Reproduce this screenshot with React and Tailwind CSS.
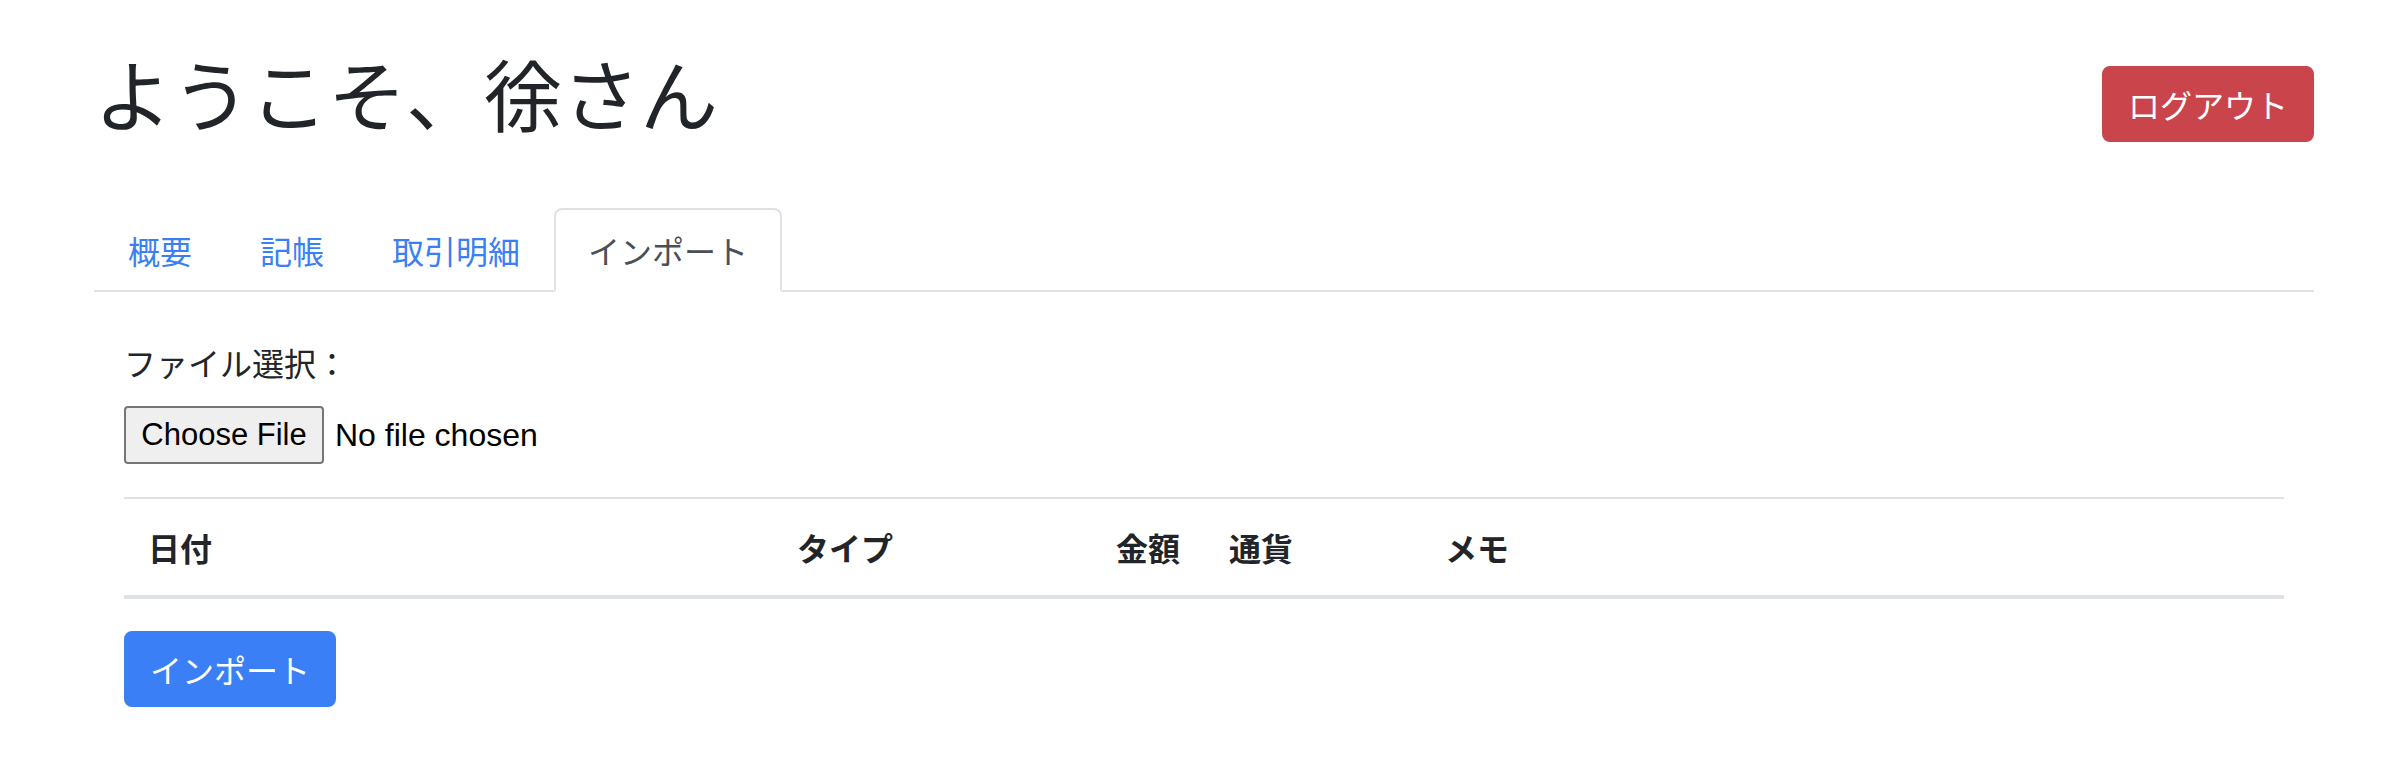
import React, { useState } from "react";

const tabs = ["概要", "記帳", "取引明細", "インポート"];

const columns = [
  { label: "日付", width: "w-[649px]" },
  { label: "タイプ", width: "w-[319px]" },
  { label: "金額", width: "w-[113px]" },
  { label: "通貨", width: "w-[216px]" },
  { label: "メモ", width: "" },
];

export default function App() {
  const [active, setActive] = useState(3);

  return (
    <div className="bg-white text-[#212529] font-['Noto_Sans_CJK_JP','Noto_Sans',sans-serif] pt-[44px]">
      <div className="w-[2220px] mx-auto">
        {/* Header */}
        <div className="flex items-center justify-between mb-[44px]">
          <h1 className="text-[78px] leading-[96px] font-normal mb-[24px]">
            ようこそ、徐さん
          </h1>
          <button className="h-[76px] px-[24px] rounded-[8px] bg-[#ca454b] text-white text-[32px] leading-[48px] border-2 border-[#ca454b]">
            ログアウト
          </button>
        </div>

        {/* Tabs */}
        <ul className="flex border-b-2 border-[#dee2e6]">
          {tabs.map((tab, i) => (
            <li key={tab} className="-mb-[2px]">
              <button
                onClick={() => setActive(i)}
                className={
                  i === active
                    ? "block px-[32px] py-[16px] text-[32px] leading-[48px] border-2 border-[#dee2e6] border-b-white rounded-t-[8px] bg-white text-[#495057]"
                    : "block px-[32px] py-[16px] text-[32px] leading-[48px] border-2 border-transparent rounded-t-[8px] text-[#3a7ff6]"
                }
              >
                {tab}
              </button>
            </li>
          ))}
        </ul>

        {/* Import pane */}
        <div className="px-[30px] pt-[46px]">
          <div className="mb-[33px]">
            <label className="block text-[32px] leading-[48px] mb-[20px]">
              ファイル選択：
            </label>
            <div className="flex items-center h-[58px] font-['Liberation_Sans',Arial,sans-serif]">
              <button className="h-[58px] w-[200px] border-2 border-[#767676] rounded-[4px] bg-[#efefef] text-black text-[31px]">
                Choose File
              </button>
              <span className="ml-[11px] text-black text-[32px]">No file chosen</span>
            </div>
          </div>

          <table className="w-full table-fixed border-collapse mb-[32px]">
            <thead>
              <tr>
                {columns.map((c) => (
                  <th
                    key={c.label}
                    className={`${c.width} text-left font-bold text-[32px] leading-[48px] p-[24px] border-t-2 border-b-4 border-[#dee2e6]`}
                  >
                    {c.label}
                  </th>
                ))}
              </tr>
            </thead>
            <tbody />
          </table>

          <button className="h-[76px] px-[24px] rounded-[8px] bg-[#3a7ff6] text-white text-[32px] leading-[48px] border-2 border-[#3a7ff6]">
            インポート
          </button>
        </div>
      </div>
    </div>
  );
}
